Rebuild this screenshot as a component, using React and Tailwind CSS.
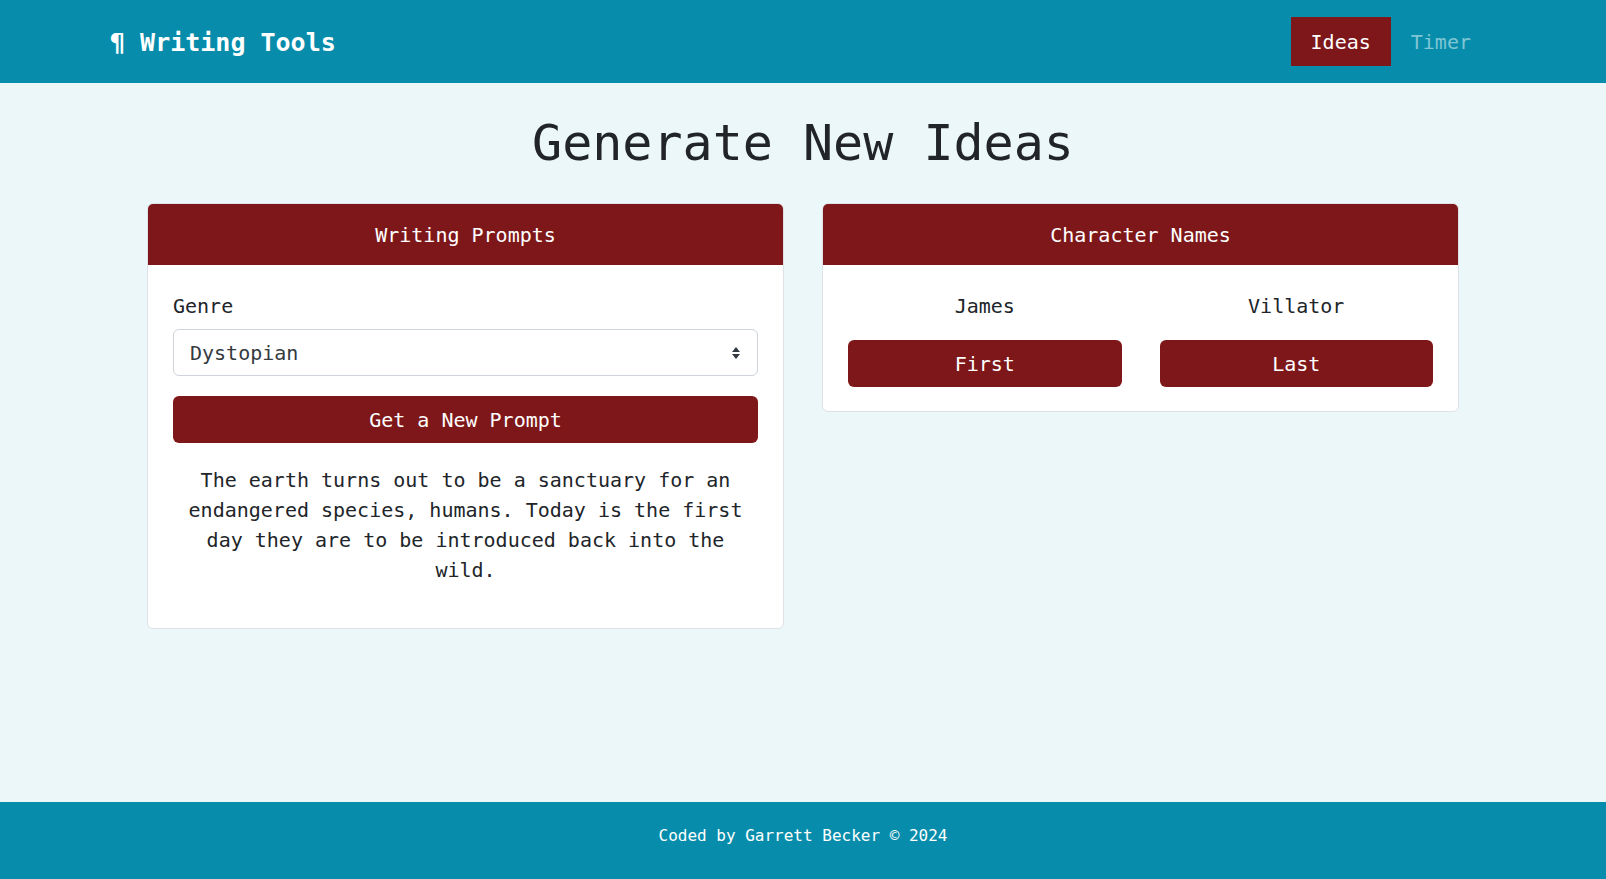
import { useState } from 'react';

const mono = { fontFamily: '"DejaVu Sans Mono", "Liberation Mono", monospace' };

const Navbar = () => (
  <nav className="h-[83px] bg-[#078dab] flex items-center justify-between pl-[110px] pr-[115px] shrink-0">
    <a href="#" className="text-white font-bold text-[25px] leading-none pt-[1px]">
      ¶ Writing Tools
    </a>
    <div className="flex items-center">
      <a href="#" className="h-[49px] px-5 flex items-center bg-[#7e1719] text-white text-[20px]">
        Ideas
      </a>
      <a href="#" className="h-[49px] px-5 flex items-center text-[#7fc5d4] text-[20px]">
        Timer
      </a>
    </div>
  </nav>
);

const Card = ({ title, children }) => (
  <div className="self-start bg-white border border-[#dee2e6] rounded-md overflow-hidden">
    <div className="h-[61px] bg-[#7e1719] text-white text-[20px] flex items-center justify-center">
      {title}
    </div>
    {children}
  </div>
);

const PromptCard = () => {
  const [genre, setGenre] = useState('Dystopian');

  return (
    <Card title="Writing Prompts">
      <div className="px-[25px] pt-[26px] pb-[27px]">
        <label className="block text-[20px] leading-[30px] text-[#212529] mb-[8px]">Genre</label>
        <div className="relative">
          <select
            value={genre}
            onChange={(e) => setGenre(e.target.value)}
            className="w-full h-[47px] appearance-none bg-white border border-[#ced4da] rounded-md pl-4 pr-10 text-[20px] text-[#343a40] outline-none"
            style={mono}
          >
            <option>Dystopian</option>
            <option>Fantasy</option>
            <option>Horror</option>
            <option>Mystery</option>
            <option>Romance</option>
            <option>Science Fiction</option>
          </select>
          <svg
            className="absolute right-[16px] top-1/2 -translate-y-1/2 pointer-events-none"
            width="12"
            height="16"
            viewBox="0 0 12 16"
          >
            <path d="M6 2 L10 7 H2 Z" fill="#343a40" />
            <path d="M6 14 L10 9 H2 Z" fill="#343a40" />
          </svg>
        </div>
        <button className="mt-5 w-full h-[47px] bg-[#7e1719] text-white text-[20px] rounded-md">
          Get a New Prompt
        </button>
        <p className="mt-[22px] mb-4 text-center text-[20px] leading-[30px] text-[#212529]">
          The earth turns out to be a sanctuary for an endangered species, humans. Today is the first day they are to be introduced back into the wild.
        </p>
      </div>
    </Card>
  );
};

const NamesCard = () => (
  <Card title="Character Names">
    <div className="px-[25px] pt-[26px] pb-[24px] grid grid-cols-2 gap-x-[38px]">
      <div className="flex flex-col items-center">
        <span className="text-[20px] leading-[30px] text-[#212529]">James</span>
        <button className="mt-[19px] w-full h-[47px] bg-[#7e1719] text-white text-[20px] rounded-md">First</button>
      </div>
      <div className="flex flex-col items-center">
        <span className="text-[20px] leading-[30px] text-[#212529]">Villator</span>
        <button className="mt-[19px] w-full h-[47px] bg-[#7e1719] text-white text-[20px] rounded-md">Last</button>
      </div>
    </div>
  </Card>
);

export default function App() {
  return (
    <div className="h-screen flex flex-col bg-[#ebf7f9]" style={mono}>
      <Navbar />
      <main className="flex-1">
        <h1 className="mt-[30px] text-center text-[50px] leading-[60px] text-[#212529]">
          Generate New Ideas
        </h1>
        <div className="mt-[30px] px-[147px] grid grid-cols-2 gap-x-[38px] items-start">
          <PromptCard />
          <NamesCard />
        </div>
      </main>
      <footer className="h-[77px] bg-[#078dab] flex justify-center pt-[22px] text-white text-[16px] leading-[24px] shrink-0">
        Coded by Garrett Becker © 2024
      </footer>
    </div>
  );
}
